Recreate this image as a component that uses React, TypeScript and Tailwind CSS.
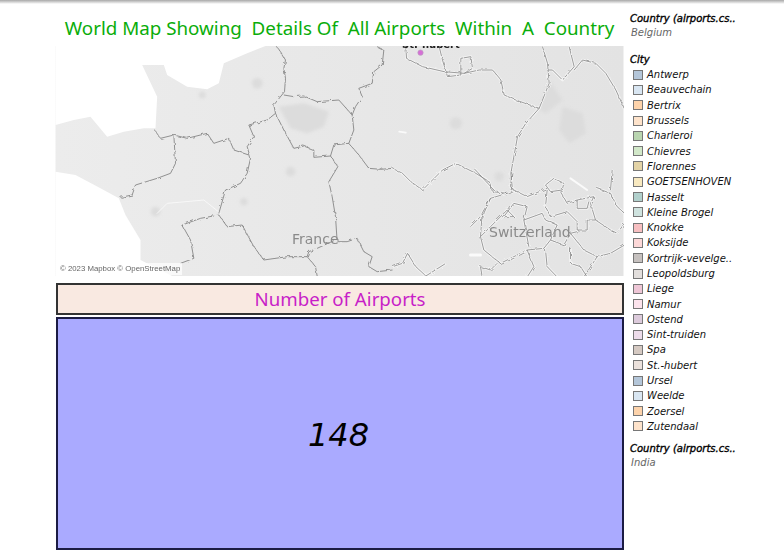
const cities = [
  ["Antwerp", "bg-[#b4c6d9]"],
  ["Beauvechain", "bg-[#d9e6f2]"],
  ["Bertrix", "bg-[#fdd3ab]"],
  ["Brussels", "bg-[#fee3cb]"],
  ["Charleroi", "bg-[#b9d5b0]"],
  ["Chievres", "bg-[#d2e8c9]"],
  ["Florennes", "bg-[#e3d3a6]"],
  ["GOETSENHOVEN", "bg-[#f8e9c0]"],
  ["Hasselt", "bg-[#b1d0cc]"],
  ["Kleine Brogel", "bg-[#cfe3df]"],
  ["Knokke", "bg-[#f7bfc1]"],
  ["Koksijde", "bg-[#fdd8d8]"],
  ["Kortrijk-vevelge..", "bg-[#c6c1bf]"],
  ["Leopoldsburg", "bg-[#e2dedc]"],
  ["Liege", "bg-[#eec6d6]"],
  ["Namur", "bg-[#fce3ec]"],
  ["Ostend", "bg-[#dccadb]"],
  ["Sint-truiden", "bg-[#eddcea]"],
  ["Spa", "bg-[#d5c9c2]"],
  ["St.-hubert", "bg-[#ebe1dc]"],
  ["Ursel", "bg-[#b4c6d9]"],
  ["Weelde", "bg-[#d9e6f2]"],
  ["Zoersel", "bg-[#fdd3ab]"],
  ["Zutendaal", "bg-[#fee3cb]"],
];

// traced from the reference at 3x, left half of the map
const leftBorders = [
  "M828 140 L840 155 855 180 850 205 855 235 852 275 820 315 825 340 800 360 745 375 760 410 740 440 750 475 740 520 720 550 675 570 655 640",
  "M850 285 L880 290 910 288 950 305 1015 300 1055 345 1060 390 1045 430 1000 435 990 468 940 472 940 450 910 438 880 445 850 390 825 340",
  "M462 390 L480 415 520 405 560 415 620 400 640 430 685 415 700 450 745 465",
  "M520 405 L525 490 510 520 470 535 405 555 395 585 360 592",
  "M655 645 L600 655 545 675 570 720 580 775 540 790",
  "M655 645 L680 680 725 675 760 740 790 780 860 770 920 770 945 800 950 828",
  "M920 770 L925 755 950 745 1000 722",
  "M990 468 L1012 500 985 545 995 590 1005 650 1010 725 1040 725 1070 715 1090 755 1115 770 1105 800 1130 815 1176 810",
  "M1045 430 L1075 465 1105 505 1140 508 1176 505",
  "M1130 140 L1150 150 1145 195 1120 215 1115 250 1075 265 1085 290 1065 320 1055 345",
];

// right half, same scale, x starts at 1176
const rightBorders = [
  "M0 505 L30 520 55 545 90 570 120 540 150 510 190 490 250 520 290 545 300 575 344 580",
  "M40 140 L42 175 90 200 155 215 215 220 260 210 300 210 325 240 335 285 370 300 440 325 400 370 375 410 355 520 360 570",
  "M140 140 L150 180 165 230 205 225 205 175 235 170 240 205 215 220",
  "M440 325 L470 250 465 190 450 140",
  "M530 140 L545 200 510 240 480 210 465 210",
  "M545 210 L570 180 610 190 640 220 670 270 695 325",
  "M0 800 L30 790 45 760 70 800 100 828 M100 828 L160 790",
];

// Swiss cantons, traced from a separate crop, origin at (1410, 510)
const swissBorders = [
  "M0 170 L40 130 60 85 110 70 130 60 170 80 230 55",
  "M225 45 L250 25 280 40 275 60 240 65 Z",
  "M230 60 L225 110 240 140 290 125 320 155 320 180 350 180 350 150 375 150 360 100 370 80 320 90 290 100 270 65",
  "M320 90 L320 115 350 115 355 95",
  "M375 150 L420 180 440 190 462 160",
  "M380 55 L420 70 440 110 462 130",
  "M60 85 L35 130 30 200 40 240 90 280 170 240 220 235 240 210 280 225 300 190 320 185",
  "M30 200 L60 170 110 120 130 140 100 140 130 100 170 110 160 150 215 130 225 150 260 165 240 210",
  "M160 150 L175 230",
  "M80 280 L60 300 30 290 35 321",
  "M170 240 L190 290 170 321",
  "M225 240 L230 290 260 321",
  "M300 190 L340 240 380 260 420 250 462 225",
  "M300 235 L300 280 330 290 350 321",
  "M380 260 L340 321",
  "M125 0 L120 50 130 60",
  "M15 0 L70 60",
  "M425 0 L420 60",
];

function MapLayer() {
  return (
    <svg viewBox="165 138 1704 690" className="block h-full w-full">
      <defs>
        <linearGradient id="land" x1="0" x2="1" y1="0" y2="0">
          <stop offset="0" stopColor="#ececec" />
          <stop offset="1" stopColor="#e3e3e3" />
        </linearGradient>
        <filter id="wobble" filterUnits="userSpaceOnUse" x="165" y="138" width="1704" height="690">
          <feTurbulence type="fractalNoise" baseFrequency="0.07" numOctaves="2" seed="4" />
          <feDisplacementMap in="SourceGraphic" scale="11" />
          <feGaussianBlur stdDeviation="0.7" />
        </filter>
        <filter id="soft" filterUnits="userSpaceOnUse" x="165" y="138" width="1704" height="690">
          <feGaussianBlur stdDeviation="5" />
        </filter>
      </defs>
      <rect x="165" y="138" width="1704" height="690" fill="url(#land)" />
      <path d="M165 138 L795 138 L740 160 670 190 655 250 620 268 560 260 500 225 490 195 425 195 470 290 465 385 430 385 370 395 320 410 270 350 220 360 165 375 Z" fill="#ffffff" />
      <path d="M165 515 L225 525 300 565 355 595 375 645 420 720 420 780 515 828 165 828 Z" fill="#ffffff" />
      <g fill="#dcdcdc" filter="url(#soft)">
        <path d="M835 320 L910 310 985 335 970 380 920 400 870 385 Z" />
        <circle cx="770" cy="250" r="16" />
        <circle cx="465" cy="635" r="14" />
        <circle cx="870" cy="515" r="14" />
        <circle cx="605" cy="285" r="10" />
        <circle cx="730" cy="605" r="11" />
        <g transform="translate(1176 0)">
          <path d="M510 320 L570 340 580 400 530 430 500 390 Z" />
          <path d="M470 240 L510 300 460 340 440 330 Z" />
          <circle cx="320" cy="530" r="14" />
          <circle cx="190" cy="370" r="18" />
        </g>
      </g>
      <g fill="none" stroke="#fafafa" strokeLinecap="round">
        <path d="M660 640 L610 600 500 610 470 640" strokeWidth="2.5" />
        <path d="M1710 535 L1760 570" strokeWidth="6" />
        <path d="M1410 765 L1440 765" strokeWidth="9" />
        <path d="M1196 395 L1216 398" strokeWidth="5" />
      </g>
      <g fill="none" stroke="#6f6f6f" strokeWidth="2.2" strokeLinejoin="round" filter="url(#wobble)">
        {leftBorders.map((d) => (
          <path key={d} d={d} />
        ))}
      </g>
      <g fill="none" strokeLinejoin="round" filter="url(#wobble)">
        <g transform="translate(1176 0)" stroke="#f4f4f4" strokeWidth="8">
          {rightBorders.map((d) => (
            <path key={d} d={d} />
          ))}
        </g>
        <g transform="translate(1410 510)" stroke="#f4f4f4" strokeWidth="8">
          {swissBorders.map((d) => (
            <path key={d} d={d} />
          ))}
        </g>
        <g transform="translate(1176 0)" stroke="#858585" strokeWidth="2.4">
          {rightBorders.map((d) => (
            <path key={d} d={d} />
          ))}
        </g>
        <g transform="translate(1410 510)" stroke="#858585" strokeWidth="2.4">
          {swissBorders.map((d) => (
            <path key={d} d={d} />
          ))}
        </g>
      </g>
      <circle cx="1260" cy="158" r="8" fill="#d66fd6" stroke="#b9a0c0" strokeWidth="2" />
    </svg>
  );
}

function LegendHeading({ title }: { title: string }) {
  return <div className="h-[14px] text-[10px] leading-[14px] italic text-black [-webkit-text-stroke:0.35px_black]">{title}</div>;
}

export default function App() {
  return (
    <div className="flex h-[558px] w-[784px] flex-col overflow-hidden bg-white font-['DejaVu_Sans',sans-serif]">
      <div className="h-[4px] shrink-0 bg-gradient-to-b from-[#a8a8a8] to-white" />
      <div className="flex min-h-0 flex-1 pl-[55px]">
        <div className="flex w-[569px] shrink-0 flex-col">
          <h1 className="h-[42px] whitespace-pre pt-[10px] text-center font-['Noto_Sans',sans-serif] text-[18.8px] leading-[28px] text-[#0aad0a]">
            World Map Showing  Details Of  All Airports  Within  A  Country
          </h1>
          <div className="relative h-[230px] overflow-hidden">
            <MapLayer />
            <span className="absolute left-[347px] top-[-7px] text-[10px] leading-[12px] font-bold text-[#222]">St.-hubert</span>
            <span className="absolute left-[237px] top-[183px] text-[14px] leading-[20px] text-[#8a8a8a]">France</span>
            <span className="absolute left-[434px] top-[176px] text-[14px] leading-[20px] text-[#8a8a8a]">Switzerland</span>
            <span className="absolute bottom-[1px] left-[3px] bg-white/70 px-[2px] font-['Liberation_Sans',sans-serif] text-[7.8px] leading-[12px] text-[#666]">
              © 2023 Mapbox © OpenStreetMap
            </span>
          </div>
          <div className="mt-[7px] ml-px flex h-[32px] items-center justify-center border-2 border-[#333] bg-[#f9e9e1] font-['Noto_Sans',sans-serif] text-[18.7px] text-[#c81fc8]">
            Number of Airports
          </div>
          <div className="mt-[2px] ml-px flex h-[233px] items-center justify-center border-2 border-[#1c1c44] bg-[#aaaaff] pt-[2px] pr-[3px] text-[32px] italic text-black">
            148
          </div>
        </div>
        <aside className="ml-[6px] flex flex-1 flex-col pt-[8px]">
          <LegendHeading title="Country (airports.cs.." />
          <div className="h-[14px] pl-px text-[10px] leading-[14px] italic text-[#666]">Belgium</div>
          <div className="mt-[13px]">
            <LegendHeading title="City" />
          </div>
          <ul>
            {cities.map(([name, swatch]) => (
              <li key={name} className="flex h-[15.3px] items-center">
                <span className={`ml-[3px] size-[10px] border border-[#777] ${swatch}`} />
                <span className="ml-[4px] whitespace-nowrap text-[10px] italic text-[#111]">{name}</span>
              </li>
            ))}
          </ul>
          <div className="mt-[8px]">
            <LegendHeading title="Country (airports.cs.." />
          </div>
          <div className="h-[14px] pl-px text-[10px] leading-[14px] italic text-[#666]">India</div>
        </aside>
      </div>
    </div>
  );
}
